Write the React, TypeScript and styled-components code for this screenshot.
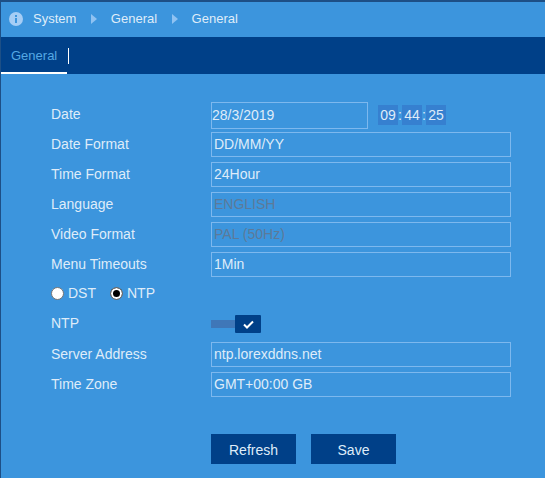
import React from 'react'
import styled, { createGlobalStyle } from 'styled-components'

const GlobalStyle = createGlobalStyle`
  html, body {
    background: #3c95dd;
    margin: 0;
    padding: 0;
  }
  body {
    font-family: 'Liberation Sans', Arial, sans-serif;
    font-size: 14px;
    overflow: hidden;
  }
`

const Page = styled.div`
  background: #3c95dd;
  border-left: 1px solid #1d4f86;
  border-top: 2px solid #1d4f86;
  box-sizing: border-box;
  height: 478px;
  width: 545px;
`

const Breadcrumb = styled.div`
  align-items: center;
  color: #dfecf9;
  display: flex;
  font-size: 13px;
  height: 33px;
  padding: 0 0 2px 8px;
`

const Crumb = styled.span`
  line-height: 16px;
`

const CrumbArrow = styled.span`
  border-bottom: 5px solid transparent;
  border-left: 6px solid #8fc2f2;
  border-top: 5px solid transparent;
  height: 0;
  margin: 0 13.5px 0 15px;
  width: 0;
`

const InfoIcon = styled.svg`
  height: 14px;
  margin-right: 10px;
  width: 14px;
`

const TabBar = styled.div`
  align-items: stretch;
  background: #004088;
  display: flex;
  height: 37px;
`

const Tab = styled.div`
  border-bottom: 2px solid #fff;
  box-sizing: border-box;
  color: #55a8e4;
  font-size: 13px;
  line-height: 38px;
  padding-left: 10px;
  width: 66px;
`

const TabDivider = styled.div`
  align-self: center;
  background: #fff;
  height: 16px;
  margin-left: 1px;
  width: 1px;
`

const Form = styled.div`
  color: #dfecf9;
  display: flex;
  flex-direction: column;
  padding: 28px 0 0 50px;
`

const Row = styled.div<{ $height?: number; $mb?: number }>`
  align-items: center;
  display: flex;
  height: ${({ $height }) => $height ?? 25}px;
  margin-bottom: ${({ $mb }) => $mb ?? 5}px;
`

const Label = styled.div<{ $raised?: boolean }>`
  padding-bottom: ${({ $raised }) => ($raised ? 4 : 2)}px;
  width: 160px;
`

const Field = styled.div<{ $disabled?: boolean; $narrow?: boolean }>`
  align-items: center;
  border: 1px solid #7db8ee;
  box-sizing: border-box;
  color: ${({ $disabled }) => ($disabled ? '#5c7a99' : '#dfecf9')};
  display: flex;
  height: 100%;
  padding-bottom: 2px;
  padding-left: ${({ $narrow }) => ($narrow ? 0 : 2)}px;
  width: ${({ $narrow }) => ($narrow ? 157 : 300)}px;
`

const Clock = styled.div`
  align-items: center;
  display: flex;
  margin: -2px 0 0 10px;
`

const ClockCell = styled.div`
  align-items: center;
  background: #3680d0;
  display: flex;
  height: 20px;
  justify-content: center;
  width: 20px;
`

const ClockColon = styled.span`
  text-align: center;
  width: 4px;
`

const RadioGroup = styled.label`
  align-items: center;
  display: flex;
  margin-right: 14px;
`

const Radio = styled.span<{ $checked?: boolean }>`
  background: ${({ $checked }) => ($checked ? '#000' : '#fff')};
  border: 1px solid #767676;
  border-radius: 50%;
  box-shadow: ${({ $checked }) => ($checked ? 'inset 0 0 0 2px #fff' : 'none')};
  box-sizing: border-box;
  height: 13px;
  margin-right: 4px;
  width: 13px;
`

const Toggle = styled.div`
  align-items: center;
  display: flex;
`

const ToggleTrack = styled.div`
  background: #3f77b8;
  height: 8px;
  width: 24px;
`

const ToggleKnob = styled.div`
  align-items: center;
  background: #004088;
  border-radius: 1px;
  display: flex;
  height: 18px;
  justify-content: center;
  width: 26px;
`

const Actions = styled.div`
  display: flex;
  gap: 15px;
  margin: 32px 0 0 160px;
`

const Button = styled.button`
  background: #004088;
  border: 0;
  color: #dfecf9;
  font-family: inherit;
  font-size: 14px;
  height: 30px;
  padding: 2px 0 0;
  width: 85px;
`

const fields = [
  { label: 'Date Format', value: 'DD/MM/YY' },
  { label: 'Time Format', value: '24Hour' },
  { label: 'Language', value: 'ENGLISH', disabled: true },
  { label: 'Video Format', value: 'PAL (50Hz)', disabled: true },
  { label: 'Menu Timeouts', value: '1Min' },
]

const App = () => {
  return (
    <Page>
      <GlobalStyle />
      <Breadcrumb>
        <InfoIcon viewBox='0 0 14 14'>
          <circle cx='7' cy='7' r='7' fill='#a5cdf5' />
          <rect x='6' y='6' width='2' height='5' fill='#3c95dd' />
          <rect x='6' y='3' width='2' height='2' fill='#3c95dd' />
        </InfoIcon>
        <Crumb>System</Crumb>
        <CrumbArrow />
        <Crumb>General</Crumb>
        <CrumbArrow />
        <Crumb>General</Crumb>
      </Breadcrumb>
      <TabBar>
        <Tab>General</Tab>
        <TabDivider />
      </TabBar>
      <Form>
        <Row $height={27} $mb={3}>
          <Label $raised>Date</Label>
          <Field $narrow>28/3/2019</Field>
          <Clock>
            <ClockCell>09</ClockCell>
            <ClockColon>:</ClockColon>
            <ClockCell>44</ClockCell>
            <ClockColon>:</ClockColon>
            <ClockCell>25</ClockCell>
          </Clock>
        </Row>
        {fields.map(field => (
          <Row key={field.label}>
            <Label>{field.label}</Label>
            <Field $disabled={field.disabled}>{field.value}</Field>
          </Row>
        ))}
        <Row $height={22} $mb={10}>
          <RadioGroup>
            <Radio />
            DST
          </RadioGroup>
          <RadioGroup>
            <Radio $checked />
            NTP
          </RadioGroup>
        </Row>
        <Row $height={20} $mb={8}>
          <Label>NTP</Label>
          <Toggle>
            <ToggleTrack />
            <ToggleKnob>
              <svg width='11' height='9' viewBox='0 0 11 9'>
                <path d='M1 4.5 L4 7.5 L10 1.5' fill='none' stroke='#fff' strokeWidth='2' />
              </svg>
            </ToggleKnob>
          </Toggle>
        </Row>
        <Row>
          <Label>Server Address</Label>
          <Field>ntp.lorexddns.net</Field>
        </Row>
        <Row>
          <Label>Time Zone</Label>
          <Field>GMT+00:00 GB</Field>
        </Row>
        <Actions>
          <Button>Refresh</Button>
          <Button>Save</Button>
        </Actions>
      </Form>
    </Page>
  )
}

export default App
